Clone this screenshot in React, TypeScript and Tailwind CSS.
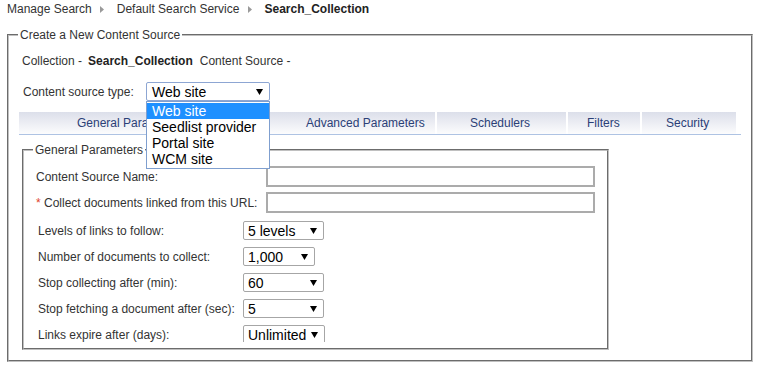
import React from 'react';

function Crumb() {
  return (
    <svg width="4" height="7" viewBox="0 0 4 7" className="shrink-0">
      <path d="M0 0L4 3.5L0 7Z" fill="#9a9a9a" />
    </svg>
  );
}

function Caret() {
  return (
    <svg width="7" height="6" viewBox="0 0 7 6" className="shrink-0">
      <path d="M0 0H7L3.5 6Z" fill="#000" />
    </svg>
  );
}

function Sel({ value, w }: { value: string; w: string }) {
  return (
    <div className={`${w} h-[19px] border border-[#a6a6a6] rounded-[2px] bg-white flex items-center justify-between pl-[4px] pr-[6px] text-[14px] leading-[16px] text-black`}>
      <span>{value}</span>
      <Caret />
    </div>
  );
}

const selectRows = [
  { label: 'Levels of links to follow:', value: '5 levels', w: 'w-[81px]' },
  { label: 'Number of documents to collect:', value: '1,000', w: 'w-[72px]' },
  { label: 'Stop collecting after (min):', value: '60', w: 'w-[81px]' },
  { label: 'Stop fetching a document after (sec):', value: '5', w: 'w-[81px]' },
  { label: 'Links expire after (days):', value: 'Unlimited', w: 'w-[82px]' },
];

const tabs = [
  { label: 'General Parameters', cls: 'w-[233px] pl-[58px]' },
  { label: 'Advanced Parameters', cls: 'w-[181px] pl-[52px]' },
  { label: 'Schedulers', cls: 'w-[129px] pl-[33px]' },
  { label: 'Filters', cls: 'w-[72px] pl-[19px]' },
  { label: 'Security', cls: 'w-[94px] pl-[24px]' },
];

const options = ['Web site', 'Seedlist provider', 'Portal site', 'WCM site'];

export default function App() {
  return (
    <div className="w-[762px] h-[369px] bg-white text-[12px] leading-[16px] text-[#333] font-['Liberation_Sans',Arial,sans-serif] overflow-hidden">
      {/* Breadcrumb */}
      <div className="h-[27px] pt-[1px] pl-[7px] flex items-start">
        <div className="flex items-center h-[16px]">
          <span>Manage Search</span>
          <span className="ml-[8px] mr-[13px] flex"><Crumb /></span>
          <span>Default Search Service</span>
          <span className="ml-[9px] mr-[12px] flex"><Crumb /></span>
          <span className="font-bold text-[#222]">Search_Collection</span>
        </div>
      </div>

      {/* Create a New Content Source */}
      <fieldset className="ml-[7px] w-[746px] border-2 [border-style:groove] border-[#c0c0c0] pb-[10px]">
        <legend className="ml-[9px] px-[2px] leading-[16px]">Create a New Content Source</legend>

        <div className="mt-[10px] ml-[13px] flex items-center h-[16px]">
          <span>Collection -</span>
          <span className="ml-[6px] font-bold text-[#222]">Search_Collection</span>
          <span className="ml-[7px]">Content Source -</span>
        </div>

        <div className="mt-[13px] ml-[14px] flex items-center">
          <span className="w-[123px]">Content source type:</span>
          <div className="relative">
            <div className="w-[124px] h-[19px] border border-[#8da6d3] rounded-[2px] bg-white flex items-center justify-between pl-[5px] pr-[6px] text-[14px] leading-[16px] text-black">
              <span>Web site</span>
              <Caret />
            </div>
            <div className="absolute z-10 left-0 top-[19px] w-[124px] border border-[#7f9fcf] bg-white py-[1px] text-[14px] text-black">
              {options.map((o, i) => (
                <div key={o} className={`h-[16px] leading-[16px] pl-[5px] ${i === 0 ? 'bg-[#1e90ff] text-white' : ''}`}>{o}</div>
              ))}
            </div>
          </div>
        </div>

        {/* Tabs */}
        <div className="mt-[11px] ml-[10px] w-[722px]">
          <div className="flex w-[717px] h-[22px] bg-gradient-to-b from-[#dcdfea] to-[#fcfcfd]">
            {tabs.map((t, i) => (
              <React.Fragment key={t.label}>
                {i > 0 && <div className="w-[2px] bg-white shrink-0" />}
                <div className={`${t.cls} flex items-center text-[#2b4077] shrink-0`}>{t.label}</div>
              </React.Fragment>
            ))}
          </div>
          <div className="h-[1px] bg-[#aec3e3]" />
        </div>

        {/* General Parameters */}
        <fieldset className="mt-[7px] ml-[13px] w-[587px] border-2 [border-style:groove] border-[#c0c0c0] pb-[6px]">
          <legend className="ml-[9px] px-[2px] leading-[16px]">General Parameters</legend>
          <div className="h-[184px] overflow-hidden pl-[12px] pt-[8px]">
            <div className="flex items-center">
              <span className="w-[230px]">Content Source Name:</span>
              <div className="w-[329px] h-[21px] border-2 border-[#ababab]" />
            </div>
            <div className="mt-[5px] flex items-center">
              <span className="w-[230px]"><span className="text-[#e0442c]">*</span> Collect documents linked from this URL:</span>
              <div className="w-[329px] h-[21px] border-2 border-[#ababab]" />
            </div>
            <div className="mt-[8px] ml-[2px] flex flex-col gap-[7px]">
              {selectRows.map((r) => (
                <div key={r.label} className="flex items-center">
                  <span className="w-[205px]">{r.label}</span>
                  <Sel value={r.value} w={r.w} />
                </div>
              ))}
            </div>
          </div>
        </fieldset>
      </fieldset>
    </div>
  );
}
